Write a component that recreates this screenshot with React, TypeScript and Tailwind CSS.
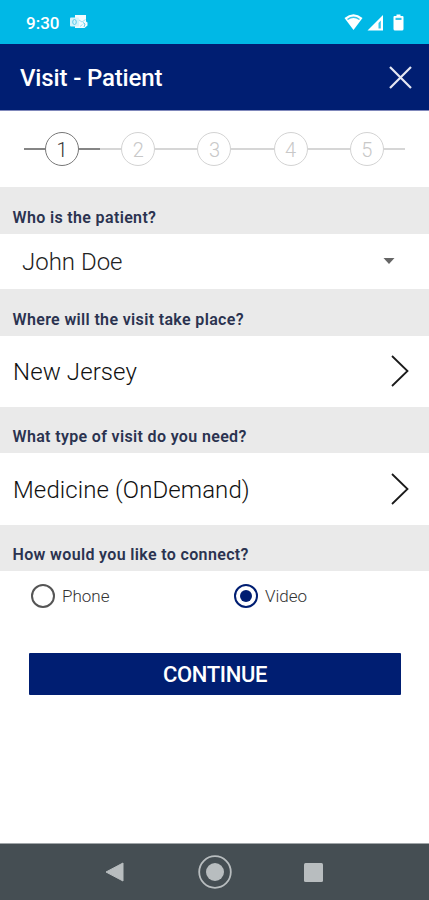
import type { ReactNode } from "react";

const steps = [1, 2, 3, 4, 5];

function StatusBar() {
  return (
    <div className="flex h-11 items-center bg-[#00b8e6] pl-[26px] pr-[25px] text-white">
      <span className="w-[33px] pt-[2px] text-[17px] font-medium leading-none whitespace-nowrap">
        9:30
      </span>
      <svg className="ml-[11px]" width="18" height="16" viewBox="0 0 18 16">
        <path d="M5 1h11v6.500l1.500 1v3l-3 2.500H5z" fill="#f2fbfe" />
        <path d="M9 6l3 2 3.500-2.500M10 12.500l2.500-2" stroke="#9be1f4" fill="none" />
        <rect x="0" y="3.500" width="9" height="9" rx="1" fill="#d5f3fb" />
        <ellipse cx="4.500" cy="8" rx="1.800" ry="2.500" stroke="#5fcdec" fill="none" />
        <path d="M13 8.500l2 1.500-1 3" stroke="#5fcdec" fill="none" />
      </svg>
      <svg className="ml-auto" width="60" height="18" viewBox="0 0 60 18">
        <path d="M0.500 5Q9.500-2.400 18.500 5L9.500 17z" fill="#fff" />
        <path d="M3.500 6.500Q9.500 2.200 15.500 6.500" stroke="#35c5ea" strokeWidth="1.500" fill="none" />
        <path d="M39 2v15.500H23.500z" fill="#fff" />
        <path d="M36.800 7.500v8h-2.300V10z" fill="#35c5ea" />
        <path d="M50.500 3h2V1.500h4V3h2q1 0 1 1v12q0 1.500-1.500 1.500h-7q-1.500 0-1.500-1.500V4q0-1 1-1z" fill="#fff" />
        <path d="M51.500 4.800h6v2.200h-6z" fill="#35c5ea" />
      </svg>
    </div>
  );
}

function Stepper() {
  return (
    <div className="flex h-[76px] items-center pl-[24px]">
      {steps.map((step) => {
        const active = step === 1;
        const line = active ? "h-[1.500px] flex-1 bg-[#858585]" : "h-[1.500px] flex-1 bg-[#d6d6d6]";
        return (
          <div key={step} className="flex w-[76.200px] items-center">
            <div className={line} />
            <div
              className={
                active
                  ? "flex size-[34px] items-center justify-center rounded-full border-[1.500px] border-[#777] pt-px text-[20px] font-[350] text-[#333]"
                  : "flex size-[34px] items-center justify-center rounded-full border-[1.500px] border-[#d3d3d3] pt-px text-[20px] font-[350] text-[#c8c8c8]"
              }
            >
              {step}
            </div>
            <div className={line} />
          </div>
        );
      })}
    </div>
  );
}

function SectionTitle({ children }: { children: ReactNode }) {
  return (
    <h2 className="flex h-[46.500px] items-end bg-[#eaeaea] pb-[5px] pl-[12.500px] text-[16px] leading-[22px] font-semibold tracking-[0.350px] text-[#2b3350]">
      {children}
    </h2>
  );
}

function LinkRow({ label }: { label: string }) {
  return (
    <div className="flex h-[71.250px] items-center justify-between pl-[13px] pr-[20px]">
      <span className="pt-[2px] text-[24px] font-[350] tracking-[0.100px] text-[#111]">{label}</span>
      <svg width="18" height="32" viewBox="0 0 18 32" fill="none" stroke="#1a1a1a" strokeWidth="1.800">
        <path d="M1 1l15.500 15L1 31" />
      </svg>
    </div>
  );
}

export default function App() {
  return (
    <div className="flex h-[900px] w-[429px] flex-col bg-white font-[Roboto,sans-serif]">
      <StatusBar />
      <header className="flex h-[67px] items-center justify-between border-b border-[#8088bb] bg-[#001e72] pl-[20px] pr-[17px]">
        <h1 className="pt-[2px] text-[24px] font-medium tracking-[-0.150px] text-white">Visit - Patient</h1>
        <svg width="23" height="23" viewBox="0 0 23 23" stroke="#e6e8f3" strokeWidth="2.200">
          <path d="M1 1l21 21M22 1L1 22" />
        </svg>
      </header>
      <Stepper />

      <SectionTitle>Who is the patient?</SectionTitle>
      <div className="flex h-[55.500px] items-center justify-between pl-[22px] pr-[34px]">
        <span className="pt-[2px] text-[24px] font-[350] text-[#222]">John Doe</span>
        <svg width="12" height="6" viewBox="0 0 12 6">
          <path d="M0.500 0h11L6 6z" fill="#666" />
        </svg>
      </div>

      <SectionTitle>Where will the visit take place?</SectionTitle>
      <LinkRow label="New Jersey" />

      <SectionTitle>What type of visit do you need?</SectionTitle>
      <LinkRow label="Medicine (OnDemand)" />

      <SectionTitle>How would you like to connect?</SectionTitle>
      <div className="flex h-[50px] items-center pl-[31px] text-[17px] font-[350] text-[#333]">
        <label className="flex w-[203px] items-center gap-[7px]">
          <span className="size-[24px] rounded-full border-2 border-[#555]" />
          <span className="pt-[2px]">Phone</span>
        </label>
        <label className="flex items-center gap-[7px]">
          <span className="flex size-[24px] items-center justify-center rounded-full border-2 border-[#001e72]">
            <span className="size-[12px] rounded-full bg-[#001e72]" />
          </span>
          <span className="pt-[2px]">Video</span>
        </label>
      </div>

      <button className="mr-[28px] ml-[29px] mt-[31.500px] h-[42px] rounded-[1px] bg-[#001e72] pt-[2px] text-[22px] font-medium tracking-[-0.350px] text-white">
        CONTINUE
      </button>

      <nav className="mt-auto flex h-[57px] items-center justify-between border-t border-[#a0a5a8] bg-[#454e53] pl-[105px] pr-[106px]">
        <svg width="19" height="20" viewBox="0 0 19 20">
          <path d="M18 1v18L1 10z" fill="#b8bdbf" stroke="#b8bdbf" strokeLinejoin="round" />
        </svg>
        <svg className="ml-px" width="34" height="34" viewBox="0 0 34 34">
          <circle cx="17" cy="17" r="15.800" fill="none" stroke="#b8bdbf" strokeWidth="1.800" />
          <circle cx="17" cy="17" r="9" fill="#b8bdbf" />
        </svg>
        <svg width="19" height="19" viewBox="0 0 19 19">
          <rect width="19" height="19" rx="1.500" fill="#b8bdbf" />
        </svg>
      </nav>
    </div>
  );
}
